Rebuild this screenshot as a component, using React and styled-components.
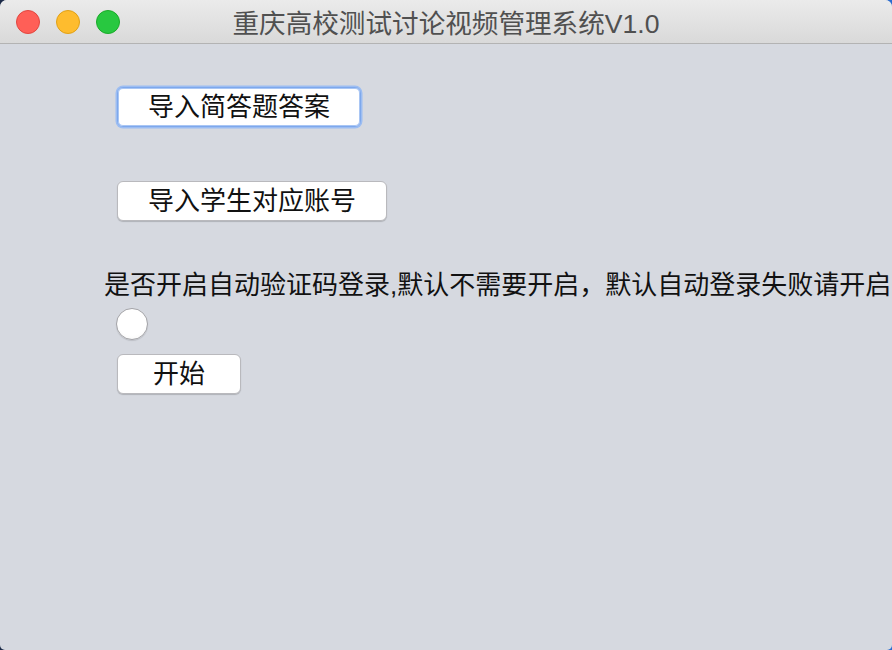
import React from "react"
import styled, { createGlobalStyle } from "styled-components"

const GlobalStyle = createGlobalStyle`
  html, body {
    margin: 0;
    padding: 0;
    background: linear-gradient(90deg, #1c2b48 0%, #3a5a8a 60%, #2a6cd0 100%);
  }
  * { box-sizing: border-box; }
`

const Window = styled.div`
  width: 892px;
  height: 650px;
  display: flex;
  flex-direction: column;
  background: #d6d9e0;
  border-radius: 7px 7px 5px 5px;
  overflow: hidden;
  font-family: "Liberation Sans", "Noto Sans CJK SC", sans-serif;
`

const TitleBar = styled.div`
  height: 44px;
  flex-shrink: 0;
  display: flex;
  align-items: center;
  position: relative;
  background: linear-gradient(#ebebeb, #d9d9d9);
  border-bottom: 1px solid #b3b3b3;
  padding-left: 16px;
  gap: 16px;
`

const Light = styled.span`
  width: 24px;
  height: 24px;
  border-radius: 50%;
  background: ${p => p.$color};
  border: 1px solid ${p => p.$edge};
`

const Title = styled.div`
  position: absolute;
  left: 0;
  right: 0;
  top: 0;
  bottom: 0;
  display: flex;
  align-items: center;
  justify-content: center;
  font-size: 26.6px;
  color: #505050;
  pointer-events: none;
`

const Content = styled.div`
  flex: 1;
  display: flex;
  flex-direction: column;
  align-items: flex-start;
  padding: 43px 0 0 104px;
`

const Button = styled.button`
  margin: ${p => p.$top}px 0 0 13px;
  height: 40px;
  width: ${p => p.$width}px;
  padding: 0;
  background: #fff;
  border: 1px solid ${p => (p.$focus ? "#7ea8ec" : "#b9b9bd")};
  box-shadow: ${p =>
    p.$focus
      ? "0 0 0 1.5px #9cbdf2, inset 0 0 0 1px #a9c6f4"
      : "0 1px 1px rgba(0,0,0,0.18)"};
  border-radius: 6px;
  font-family: "Liberation Sans", "Noto Sans CJK SC", sans-serif;
  font-size: 26px;
  line-height: 30px;
  color: #111;
  text-align: center;
`

const Label = styled.div`
  margin-top: 49px;
  font-size: 26px;
  line-height: 30px;
  color: #111;
  white-space: nowrap;
`

const Radio = styled.span`
  margin: 8px 0 0 12px;
  width: 32px;
  height: 32px;
  border-radius: 50%;
  background: radial-gradient(circle at 50% 40%, #ffffff 60%, #f4f4f4 100%);
  border: 1px solid #a4a4a8;
  box-shadow: 0 1px 1px rgba(0,0,0,0.12);
`

export default function App() {
  return (
    <>
      <GlobalStyle />
      <Window>
        <TitleBar>
          <Light $color="#ff5f57" $edge="#e2463f" />
          <Light $color="#febc2e" $edge="#e1a116" />
          <Light $color="#28c840" $edge="#1aab29" />
          <Title>重庆高校测试讨论视频管理系统V1.0</Title>
        </TitleBar>
        <Content>
          <Button $top={0} $width={244} $focus>导入简答题答案</Button>
          <Button $top={54} $width={270}>导入学生对应账号</Button>
          <Label>是否开启自动验证码登录,默认不需要开启，默认自动登录失败请开启</Label>
          <Radio />
          <Button $top={14} $width={124}>开始</Button>
        </Content>
      </Window>
    </>
  )
}
